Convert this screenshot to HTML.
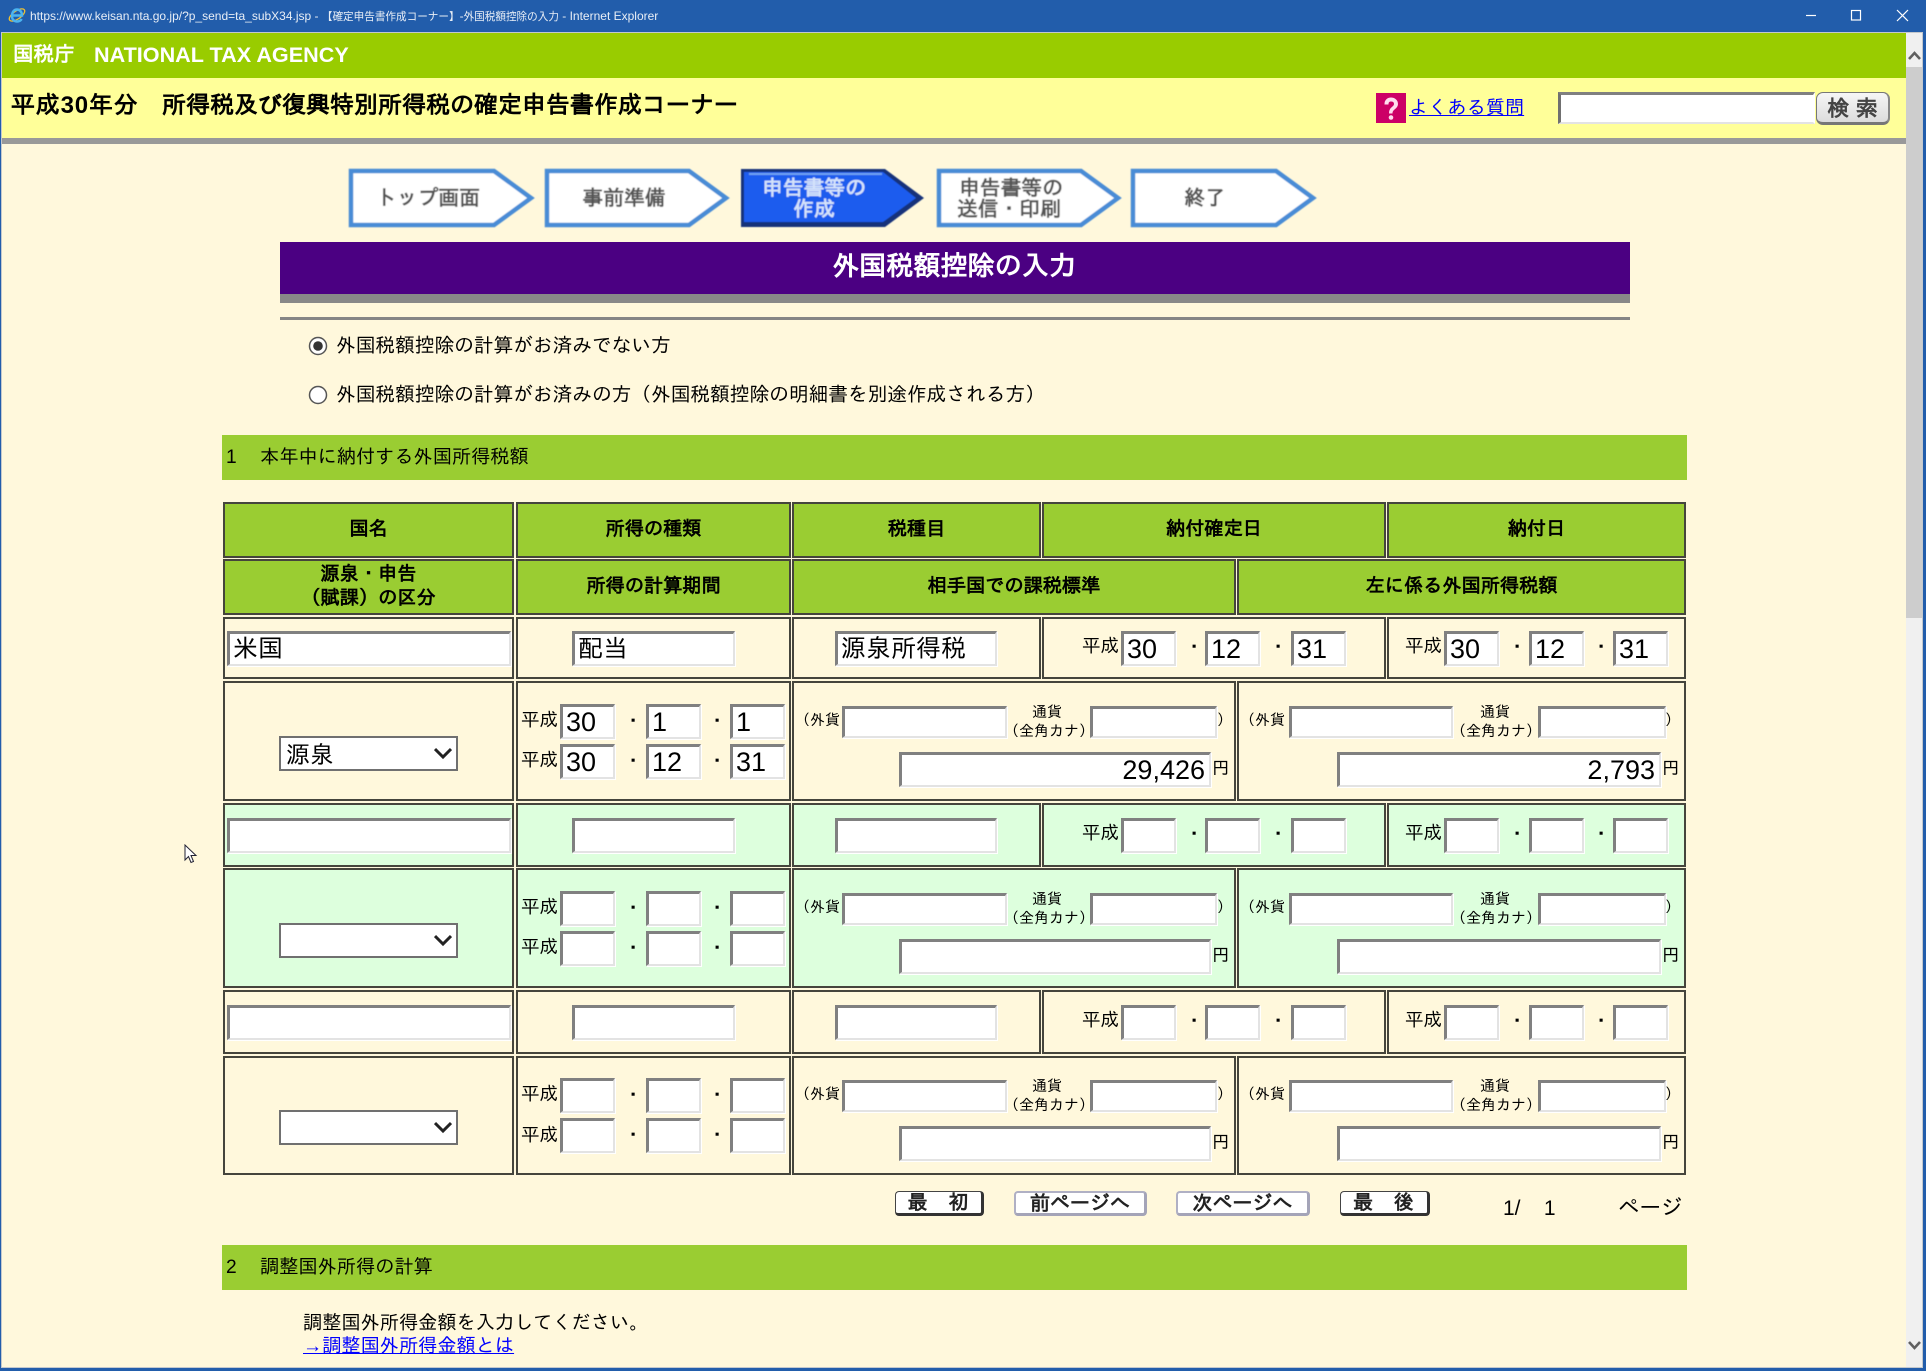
<!DOCTYPE html>
<html lang="ja"><head><meta charset="utf-8"><title>外国税額控除の入力</title>
<style>
html,body{margin:0;padding:0;width:1926px;height:1371px;overflow:hidden;background:#225dab}
body{position:relative;font-family:"Liberation Sans","IPAGothic","Noto Sans CJK JP",sans-serif;color:#000}
div,a,span{position:absolute;box-sizing:border-box;white-space:nowrap}
a{color:#00f;text-decoration:underline}
.c{border:2px solid #45453c;background:#fff8dc}
.g5 .c{background:#dfd}
.h{border:2px solid #45453c;background:#9acd32;font-weight:bold;font-size:19.2px;text-align:center;line-height:24px}
.i{background:#fff;border-style:solid;border-width:3px 2px 2px 3px;border-color:#808080 #e3e3e3 #e3e3e3 #808080;box-shadow:1px 1px 0 #fff;font-size:27px;padding-left:3px;line-height:30px;overflow:hidden;height:35px}
.j{font-size:25px}
.d{width:55px;top:631px}
.f{height:32px;top:706px}
.a{height:35px;top:752px;text-align:right;padding:0 4px 0 0}
.p{font-size:18.5px;line-height:20px}
.m{font-size:18px;line-height:20px;font-weight:bold}
.s{font-size:15px;line-height:16px}
.sel{left:279px;top:736px;width:179px;height:35px;background:#fff;border:2px solid #707070;font-size:24px;line-height:36px;padding-left:5px}
.g{left:0;width:0;height:0}
.sec{left:222px;width:1465px;height:45px;background:#9acd32;font-size:19.2px;line-height:46px}
.b{top:1191px;height:25px;background:#fff;border-radius:4px;font-weight:bold;font-size:20px;line-height:23px;text-align:center;color:#222}
.b1{border:1px solid #444;border-right:3px solid #333;border-bottom:3px solid #333}
.b2{border:2px solid #b0b0c4;border-right:3px solid #a4a4b8;border-bottom:3px solid #a4a4b8}
</style></head><body>

<!-- title bar -->
<svg style="position:absolute;left:7px;top:5px" width="20" height="20" viewBox="0 0 20 20"><ellipse cx="10" cy="10" rx="9" ry="4" transform="rotate(-35 10 10)" fill="none" stroke="#f2c230" stroke-width="1.300"/><path d="M5 10.500h10c0-3.500-2-6-5-6s-5 2.500-5 6.500 2.300 5.500 5.200 5.500c2 0 3.600-1 4.500-2.500" fill="none" stroke="#4bb4f0" stroke-width="2.400"/></svg>
<div style="left:30px;top:8px;font-size:12px;line-height:16px;color:#e8eef6;font-family:'Liberation Sans','Noto Sans CJK JP',sans-serif">https://www.keisan.nta.go.jp/?p_send=ta_subX34.jsp - <span style="position:static;font-size:10.6px">【確定申告書作成コーナー】</span>-<span style="position:static;font-size:10.6px">外国税額控除の入力</span> - Internet Explorer</div>
<svg style="position:absolute;left:1800px;top:6px" width="116" height="20" fill="none" stroke="#fff" stroke-width="1.200"><path d="M6 9.500h10"/><rect x="51.500" y="4.500" width="9" height="9.500"/><path d="M97 4l11 11M108 4L97 15"/></svg>

<!-- client -->
<div style="left:1px;top:32px;width:1922px;height:1336px;background:#fff8dc;border:1px solid #c4c8cc"></div>
<div style="left:2px;top:33px;width:1904px;height:45px;background:#9c0"></div>
<div style="left:2px;top:78px;width:1904px;height:60px;background:#ff9"></div>
<div style="left:2px;top:138px;width:1904px;height:6px;background:#999"></div>

<!-- scrollbar -->
<div style="left:1906px;top:33px;width:16px;height:1334px;background:#f0f0f0"></div>
<div style="left:1906px;top:67px;width:16px;height:551px;background:#cdcdcd"></div>
<svg style="position:absolute;left:1906px;top:48px" width="16" height="14" fill="none" stroke="#606060" stroke-width="2.600"><path d="M3 11l5.500-6 5.500 6"/></svg>
<svg style="position:absolute;left:1906px;top:1339px" width="16" height="14" fill="none" stroke="#606060" stroke-width="2.600"><path d="M3 3l5.500 6 5.500-6"/></svg>

<!-- headers -->
<div style="left:13px;top:43px;font-size:20.500px;line-height:24px;font-weight:bold;color:#fff">国税庁</div>
<div style="left:94px;top:43px;font-size:21.600px;line-height:24px;font-weight:bold;color:#fff">NATIONAL TAX AGENCY</div>
<div style="left:11px;top:92px;font-size:24px;line-height:28px;font-weight:bold;letter-spacing:.8px">平成30年分</div>
<div style="left:162px;top:92px;font-size:24px;line-height:28px;font-weight:bold">所得税及び復興特別所得税の確定申告書作成コーナー</div>
<svg style="position:absolute;left:1376px;top:93px" width="30" height="30"><rect width="30" height="30" fill="#c06"/><path d="M9 11c0-4 3-6 6-6s6.500 2 6.500 6c0 5-5.500 4.500-5.500 9h-2.500c0-6 5-5.500 5-9 0-1.800-1.500-3-3.500-3s-3 1.200-3 3z" fill="#fde" stroke="#fde"/><circle cx="15" cy="24.500" r="2.300" fill="#fde"/></svg>
<a style="left:1409px;top:97px;font-size:19.200px;line-height:24px">よくある質問</a>
<div style="left:1558px;top:92px;width:257px;height:32px;background:#fff;border-style:solid;border-width:3px 2px 2px 3px;border-color:#808080 #fff #e3e3e3 #707070"></div>
<div style="left:1816px;top:92px;width:74px;height:33px;border-radius:7px;background:linear-gradient(#f6f6f6,#dcdcdc);border:1px solid #777;border-bottom:3px solid #777;border-right:2px solid #888;font-weight:bold;font-size:22px;line-height:32px;text-align:center;color:#444">検 索</div>

<!-- steps -->
<svg style="position:absolute;left:0;top:0" width="1400" height="240" font-family="Liberation Sans,IPAGothic,sans-serif" font-weight="bold" font-size="20.800" text-anchor="middle">
<defs><filter id="b" x="-5%" y="-5%" width="110%" height="110%"><feGaussianBlur stdDeviation=".45"/></filter></defs>
<g filter="url(#b)">
<g fill="#fff" stroke="#4a8cd6" stroke-width="4.500"><polygon points="351,171 494,171 531,198 494,225 351,225"/><polygon points="547,171 689,171 726,198 689,225 547,225"/><polygon points="939,171 1081,171 1118,198 1081,225 939,225"/><polygon points="1133,171 1276,171 1313,198 1276,225 1133,225"/></g>
<polygon points="741,169 885,169 924,198 885,227 741,227" fill="#16337a"/>
<polygon points="744,172 883,172 916,198 883,222 744,222" fill="#1b5cee"/>
<path d="M749 174h133" stroke="#6ea2f0" stroke-width="2"/>
<g fill="#555"><text x="428" y="205">トップ画面</text><text x="624" y="205">事前準備</text><text x="1011" y="195">申告書等の</text><text x="1009" y="216">送信・印刷</text><text x="1205" y="205">終了</text></g>
<g fill="#d4e2fa"><text x="814" y="195">申告書等の</text><text x="814" y="216">作成</text></g>
</g></svg>

<!-- purple title -->
<div style="left:280px;top:242px;width:1350px;height:52px;background:#4b0082;color:#fff;font-weight:bold;font-size:27.100px;line-height:48px;text-align:center;padding-right:2px">外国税額控除の入力</div>
<div style="left:280px;top:294px;width:1350px;height:9px;background:#888"></div>
<div style="left:280px;top:317px;width:1350px;height:3px;background:#858585"></div>

<!-- radios -->
<svg style="position:absolute;left:306.500px;top:334.500px" width="22" height="70"><circle cx="11" cy="11" r="8.500" fill="#fff" stroke="#555" stroke-width="1.500"/><circle cx="11" cy="11" r="4.800" fill="#333"/><circle cx="11" cy="60" r="8.500" fill="#fff" stroke="#555" stroke-width="1.500"/></svg>
<div style="left:336px;top:334px;font-size:19.700px;line-height:24px">外国税額控除の計算がお済みでない方</div>
<div style="left:336px;top:383px;font-size:19.700px;line-height:24px">外国税額控除の計算がお済みの方（外国税額控除の明細書を別途作成される方）</div>

<!-- section 1 -->
<div class="sec" style="top:435px"><span style="left:4px">1</span><span style="left:38px">本年中に納付する外国所得税額</span></div>

<!-- table header -->
<div class="h" style="left:223px;top:502px;width:291px;height:56px;line-height:52px">国名</div>
<div class="h" style="left:516px;top:502px;width:275px;height:56px;line-height:52px">所得の種類</div>
<div class="h" style="left:792px;top:502px;width:249px;height:56px;line-height:52px">税種目</div>
<div class="h" style="left:1042px;top:502px;width:344px;height:56px;line-height:52px">納付確定日</div>
<div class="h" style="left:1387px;top:502px;width:299px;height:56px;line-height:52px">納付日</div>
<div class="h" style="left:223px;top:559px;width:291px;height:56px;padding-top:2px">源泉・申告<br>（賦課）の区分</div>
<div class="h" style="left:516px;top:559px;width:275px;height:56px;line-height:52px">所得の計算期間</div>
<div class="h" style="left:792px;top:559px;width:444px;height:56px;line-height:52px">相手国での課税標準</div>
<div class="h" style="left:1237px;top:559px;width:449px;height:56px;line-height:52px">左に係る外国所得税額</div>

<!-- group 1 -->
<div class="g" style="top:0">
<div class="c" style="left:223px;top:617px;width:291px;height:62px"></div>
<div class="c" style="left:516px;top:617px;width:275px;height:62px"></div>
<div class="c" style="left:792px;top:617px;width:249px;height:62px"></div>
<div class="c" style="left:1042px;top:617px;width:344px;height:62px"></div>
<div class="c" style="left:1387px;top:617px;width:299px;height:62px"></div>
<div class="i j" style="left:227px;top:631px;width:284px">米国</div>
<div class="i j" style="left:572px;top:631px;width:163px">配当</div>
<div class="i j" style="left:835px;top:631px;width:162px">源泉所得税</div>
<div class="p" style="left:1082px;top:636px">平成</div><div class="i d" style="left:1121px">30</div><div class="m" style="left:1185px;top:637px">・</div><div class="i d" style="left:1205px">12</div><div class="m" style="left:1269px;top:637px">・</div><div class="i d" style="left:1291px">31</div>
<div class="p" style="left:1405px;top:636px">平成</div><div class="i d" style="left:1444px">30</div><div class="m" style="left:1508px;top:637px">・</div><div class="i d" style="left:1529px">12</div><div class="m" style="left:1592px;top:637px">・</div><div class="i d" style="left:1613px">31</div>
<div class="c" style="left:223px;top:681px;width:291px;height:120px"></div>
<div class="c" style="left:516px;top:681px;width:275px;height:120px"></div>
<div class="c" style="left:792px;top:681px;width:444px;height:120px"></div>
<div class="c" style="left:1237px;top:681px;width:449px;height:120px"></div>
<div class="sel">源泉<svg style="position:absolute;left:153px;top:9px" width="18" height="13" fill="none" stroke="#222" stroke-width="3"><path d="M1 2l8 8 8-8"/></svg></div>
<div class="p" style="left:521px;top:710px">平成</div><div class="i" style="left:560px;top:704px;width:55px">30</div><div class="m" style="left:624px;top:711px">・</div><div class="i" style="left:646px;top:704px;width:55px">1</div><div class="m" style="left:708px;top:711px">・</div><div class="i" style="left:730px;top:704px;width:55px">1</div>
<div class="p" style="left:521px;top:750px">平成</div><div class="i" style="left:560px;top:744px;width:55px">30</div><div class="m" style="left:624px;top:751px">・</div><div class="i" style="left:646px;top:744px;width:55px">12</div><div class="m" style="left:708px;top:751px">・</div><div class="i" style="left:730px;top:744px;width:55px">31</div>
<div class="s" style="left:795px;top:713px">（外貨</div><div class="i f" style="left:842px;width:165px"></div><div class="s" style="left:1032px;top:705px">通貨</div><div class="s" style="left:1004px;top:724px">（全角カナ）</div><div class="i f" style="left:1090px;width:127px"></div><div class="s" style="left:1217px;top:713px">）</div>
<div class="i a" style="left:899px;width:312px">29,426</div><div class="p" style="left:1212px;top:758px;font-size:17.500px">円</div>
<div class="s" style="left:1240px;top:713px">（外貨</div><div class="i f" style="left:1289px;width:164px"></div><div class="s" style="left:1480px;top:705px">通貨</div><div class="s" style="left:1451px;top:724px">（全角カナ）</div><div class="i f" style="left:1538px;width:128px"></div><div class="s" style="left:1665px;top:713px">）</div>
<div class="i a" style="left:1337px;width:324px">2,793</div><div class="p" style="left:1662px;top:758px;font-size:17.500px">円</div>
</div>

<!-- group 2 -->
<div class="g g5" style="top:187px">
<div class="c" style="left:223px;top:616px;width:291px;height:64px"></div>
<div class="c" style="left:516px;top:616px;width:275px;height:64px"></div>
<div class="c" style="left:792px;top:616px;width:249px;height:64px"></div>
<div class="c" style="left:1042px;top:616px;width:344px;height:64px"></div>
<div class="c" style="left:1387px;top:616px;width:299px;height:64px"></div>
<div class="i" style="left:227px;top:631px;width:284px"></div>
<div class="i" style="left:572px;top:631px;width:163px"></div>
<div class="i" style="left:835px;top:631px;width:162px"></div>
<div class="p" style="left:1082px;top:636px">平成</div><div class="i d" style="left:1121px"></div><div class="m" style="left:1185px;top:637px">・</div><div class="i d" style="left:1205px"></div><div class="m" style="left:1269px;top:637px">・</div><div class="i d" style="left:1291px"></div>
<div class="p" style="left:1405px;top:636px">平成</div><div class="i d" style="left:1444px"></div><div class="m" style="left:1508px;top:637px">・</div><div class="i d" style="left:1529px"></div><div class="m" style="left:1592px;top:637px">・</div><div class="i d" style="left:1613px"></div>
<div class="c" style="left:223px;top:681px;width:291px;height:120px"></div>
<div class="c" style="left:516px;top:681px;width:275px;height:120px"></div>
<div class="c" style="left:792px;top:681px;width:444px;height:120px"></div>
<div class="c" style="left:1237px;top:681px;width:449px;height:120px"></div>
<div class="sel"><svg style="position:absolute;left:153px;top:9px" width="18" height="13" fill="none" stroke="#222" stroke-width="3"><path d="M1 2l8 8 8-8"/></svg></div>
<div class="p" style="left:521px;top:710px">平成</div><div class="i" style="left:560px;top:704px;width:55px"></div><div class="m" style="left:624px;top:711px">・</div><div class="i" style="left:646px;top:704px;width:55px"></div><div class="m" style="left:708px;top:711px">・</div><div class="i" style="left:730px;top:704px;width:55px"></div>
<div class="p" style="left:521px;top:750px">平成</div><div class="i" style="left:560px;top:744px;width:55px"></div><div class="m" style="left:624px;top:751px">・</div><div class="i" style="left:646px;top:744px;width:55px"></div><div class="m" style="left:708px;top:751px">・</div><div class="i" style="left:730px;top:744px;width:55px"></div>
<div class="s" style="left:795px;top:713px">（外貨</div><div class="i f" style="left:842px;width:165px"></div><div class="s" style="left:1032px;top:705px">通貨</div><div class="s" style="left:1004px;top:724px">（全角カナ）</div><div class="i f" style="left:1090px;width:127px"></div><div class="s" style="left:1217px;top:713px">）</div>
<div class="i a" style="left:899px;width:312px"></div><div class="p" style="left:1212px;top:758px;font-size:17.500px">円</div>
<div class="s" style="left:1240px;top:713px">（外貨</div><div class="i f" style="left:1289px;width:164px"></div><div class="s" style="left:1480px;top:705px">通貨</div><div class="s" style="left:1451px;top:724px">（全角カナ）</div><div class="i f" style="left:1538px;width:128px"></div><div class="s" style="left:1665px;top:713px">）</div>
<div class="i a" style="left:1337px;width:324px"></div><div class="p" style="left:1662px;top:758px;font-size:17.500px">円</div>
</div>

<!-- group 3 -->
<div class="g" style="top:374px">
<div class="c" style="left:223px;top:616px;width:291px;height:64px"></div>
<div class="c" style="left:516px;top:616px;width:275px;height:64px"></div>
<div class="c" style="left:792px;top:616px;width:249px;height:64px"></div>
<div class="c" style="left:1042px;top:616px;width:344px;height:64px"></div>
<div class="c" style="left:1387px;top:616px;width:299px;height:64px"></div>
<div class="i" style="left:227px;top:631px;width:284px"></div>
<div class="i" style="left:572px;top:631px;width:163px"></div>
<div class="i" style="left:835px;top:631px;width:162px"></div>
<div class="p" style="left:1082px;top:636px">平成</div><div class="i d" style="left:1121px"></div><div class="m" style="left:1185px;top:637px">・</div><div class="i d" style="left:1205px"></div><div class="m" style="left:1269px;top:637px">・</div><div class="i d" style="left:1291px"></div>
<div class="p" style="left:1405px;top:636px">平成</div><div class="i d" style="left:1444px"></div><div class="m" style="left:1508px;top:637px">・</div><div class="i d" style="left:1529px"></div><div class="m" style="left:1592px;top:637px">・</div><div class="i d" style="left:1613px"></div>
<div class="c" style="left:223px;top:682px;width:291px;height:119px"></div>
<div class="c" style="left:516px;top:682px;width:275px;height:119px"></div>
<div class="c" style="left:792px;top:682px;width:444px;height:119px"></div>
<div class="c" style="left:1237px;top:682px;width:449px;height:119px"></div>
<div class="sel"><svg style="position:absolute;left:153px;top:9px" width="18" height="13" fill="none" stroke="#222" stroke-width="3"><path d="M1 2l8 8 8-8"/></svg></div>
<div class="p" style="left:521px;top:710px">平成</div><div class="i" style="left:560px;top:704px;width:55px"></div><div class="m" style="left:624px;top:711px">・</div><div class="i" style="left:646px;top:704px;width:55px"></div><div class="m" style="left:708px;top:711px">・</div><div class="i" style="left:730px;top:704px;width:55px"></div>
<div class="p" style="left:521px;top:751px">平成</div><div class="i" style="left:560px;top:744px;width:55px"></div><div class="m" style="left:624px;top:751px">・</div><div class="i" style="left:646px;top:744px;width:55px"></div><div class="m" style="left:708px;top:751px">・</div><div class="i" style="left:730px;top:744px;width:55px"></div>
<div class="s" style="left:795px;top:713px">（外貨</div><div class="i f" style="left:842px;width:165px"></div><div class="s" style="left:1032px;top:705px">通貨</div><div class="s" style="left:1004px;top:724px">（全角カナ）</div><div class="i f" style="left:1090px;width:127px"></div><div class="s" style="left:1217px;top:713px">）</div>
<div class="i a" style="left:899px;width:312px"></div><div class="p" style="left:1212px;top:758px;font-size:17.500px">円</div>
<div class="s" style="left:1240px;top:713px">（外貨</div><div class="i f" style="left:1289px;width:164px"></div><div class="s" style="left:1480px;top:705px">通貨</div><div class="s" style="left:1451px;top:724px">（全角カナ）</div><div class="i f" style="left:1538px;width:128px"></div><div class="s" style="left:1665px;top:713px">）</div>
<div class="i a" style="left:1337px;width:324px"></div><div class="p" style="left:1662px;top:758px;font-size:17.500px">円</div>
</div>

<!-- cursor -->
<svg style="position:absolute;left:184px;top:844px" width="14" height="21"><path d="M1 1v15l3.500-3.500 2.500 6 2.500-1-2.500-6h5z" fill="#fff" stroke="#223" stroke-width="1"/></svg>

<!-- pager -->
<div class="b b1" style="left:895px;width:89px;letter-spacing:1px">最&nbsp;&nbsp;&nbsp;初</div>
<div class="b b2" style="left:1014px;width:133px">前ページへ</div>
<div class="b b2" style="left:1176px;width:134px">次ページへ</div>
<div class="b b1" style="left:1340px;width:90px;letter-spacing:1px">最&nbsp;&nbsp;&nbsp;後</div>
<div style="left:1503px;top:1197px;font-size:21px;line-height:24px">1/&nbsp;&nbsp;&nbsp;&nbsp;1</div>
<div style="left:1618px;top:1196px;font-size:21.500px;line-height:24px">ページ</div>

<!-- section 2 -->
<div class="sec" style="top:1245px"><span style="left:4px">2</span><span style="left:38px">調整国外所得の計算</span></div>
<div style="left:303px;top:1312px;font-size:19.200px;line-height:24px">調整国外所得金額を入力してください。</div>
<a style="left:303px;top:1335px;font-size:19.200px;line-height:24px">→調整国外所得金額とは</a>
</body></html>
